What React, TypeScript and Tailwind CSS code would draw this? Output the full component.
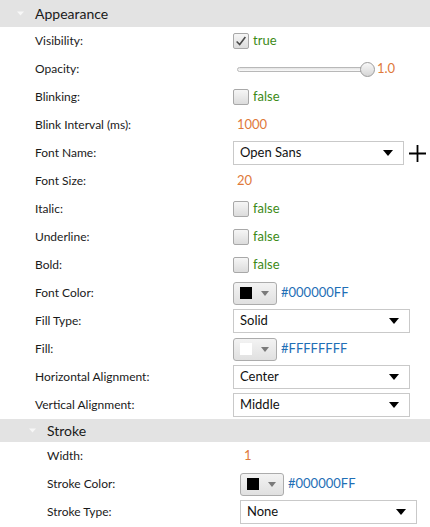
import React from "react";

const font = { fontFamily: "Lato, 'Open Sans', sans-serif" };

type Row =
  | { label: string; kind: "bool"; value: boolean }
  | { label: string; kind: "num"; value: string }
  | { label: string; kind: "slider"; value: string }
  | { label: string; kind: "select"; value: string; plus?: boolean }
  | { label: string; kind: "color"; value: string; swatch: string };

const appearance: Row[] = [
  { label: "Visibility:", kind: "bool", value: true },
  { label: "Opacity:", kind: "slider", value: "1.0" },
  { label: "Blinking:", kind: "bool", value: false },
  { label: "Blink Interval (ms):", kind: "num", value: "1000" },
  { label: "Font Name:", kind: "select", value: "Open Sans", plus: true },
  { label: "Font Size:", kind: "num", value: "20" },
  { label: "Italic:", kind: "bool", value: false },
  { label: "Underline:", kind: "bool", value: false },
  { label: "Bold:", kind: "bool", value: false },
  { label: "Font Color:", kind: "color", value: "#000000FF", swatch: "#000000" },
  { label: "Fill Type:", kind: "select", value: "Solid" },
  { label: "Fill:", kind: "color", value: "#FFFFFFFF", swatch: "#ffffff" },
  { label: "Horizontal Alignment:", kind: "select", value: "Center" },
  { label: "Vertical Alignment:", kind: "select", value: "Middle" },
];

const stroke: Row[] = [
  { label: "Width:", kind: "num", value: "1" },
  { label: "Stroke Color:", kind: "color", value: "#000000FF", swatch: "#000000" },
  { label: "Stroke Type:", kind: "select", value: "None" },
];

function Checkbox({ checked }: { checked: boolean }) {
  return (
    <span className="flex h-4 w-4 items-center justify-center rounded-[2px] border border-[#a8a8a8] bg-gradient-to-b from-[#f6f6f6] to-[#dcdcdc]">
      {checked && (
        <svg viewBox="0 0 16 16" className="h-3.5 w-3.5">
          <path d="M3 8.5 L6.5 12 L13 3.5" fill="none" stroke="#4a4a4a" strokeWidth="1.8" />
        </svg>
      )}
    </span>
  );
}

function Arrow({ color = "#000", w = 10, h = 6 }: { color?: string; w?: number; h?: number }) {
  return (
    <svg width={w} height={h} viewBox="0 0 10 6">
      <path d="M0 0 H10 L5 6 Z" fill={color} />
    </svg>
  );
}

function Value({ row }: { row: Row }) {
  switch (row.kind) {
    case "bool":
      return (
        <div className="flex items-center gap-1">
          <Checkbox checked={row.value} />
          <span className="text-[13px] text-[#3c8a16]">{row.value ? "true" : "false"}</span>
        </div>
      );
    case "num":
      return <span className="pl-1 text-[13px] text-[#e0793a]">{row.value}</span>;
    case "slider":
      return (
        <div className="flex items-center">
          <div className="ml-1 flex w-[138px] items-center">
            <div className="h-[5px] flex-1 rounded-full border border-[#b8b8b8] bg-gradient-to-b from-[#e4e4e4] to-[#fafafa]" />
            <div className="-ml-1 h-[15px] w-[15px] rounded-full border border-[#9c9c9c] bg-gradient-to-b from-[#f8f8f8] to-[#d6d6d6]" />
          </div>
          <span className="ml-[2px] text-[13px] text-[#e0793a]">{row.value}</span>
        </div>
      );
    case "select":
      return (
        <div className="flex items-center">
          <div
            className={`flex h-6 items-center justify-between border border-[#c9c9c9] bg-white pl-[6px] pr-[10px] ${
              row.plus ? "w-[171px]" : "w-[177px]"
            }`}
          >
            <span className="text-[13px] text-[#111]">{row.value}</span>
            <Arrow />
          </div>
          {row.plus && (
            <svg width="17" height="17" viewBox="0 0 17 17" className="ml-[5px]">
              <path d="M8.5 0 V17 M0 8.5 H17" stroke="#000" strokeWidth="1.8" />
            </svg>
          )}
        </div>
      );
    case "color":
      return (
        <div className="flex items-center gap-1">
          <div className="flex h-[23px] w-[44px] items-center rounded-[3px] border border-[#acacac] bg-gradient-to-b from-[#f3f3f3] to-[#e0e0e0] pl-[6px]">
            <span className="h-3 w-3" style={{ backgroundColor: row.swatch }} />
            <span className="ml-[9px]">
              <Arrow color="#7a7a7a" w={8} h={5} />
            </span>
          </div>
          <span className="text-[13px] text-[#1f6fb6]">{row.value}</span>
        </div>
      );
  }
}

function Section({
  title,
  rows,
  indent,
  headerH,
  labelW,
}: {
  title: string;
  rows: Row[];
  indent: string;
  headerH: string;
  labelW: string;
}) {
  return (
    <div>
      <div className={`flex items-center bg-[#e3e3e3] ${headerH} ${indent}`}>
        <span className="-ml-[18px] mr-[11px]">
          <Arrow color="#f7f7f7" w={7} h={5} />
        </span>
        <span className="text-[14px] text-[#1a1a1a]">{title}</span>
      </div>
      {rows.map((r) => (
        <div key={r.label} className={`flex h-7 items-center ${indent}`}>
          <span className={`${labelW} shrink-0 text-[12px] text-[#1a1a1a]`}>{r.label}</span>
          <Value row={r} />
        </div>
      ))}
    </div>
  );
}

export default function App() {
  return (
    <div className="h-[527px] w-[430px] overflow-hidden bg-white" style={font}>
      <Section title="Appearance" rows={appearance} indent="pl-[35px]" headerH="h-[27px]" labelW="w-[198px]" />
      <Section title="Stroke" rows={stroke} indent="pl-[47px]" headerH="h-[23px]" labelW="w-[193px]" />
      <div className="mt-[1px] border-t border-[#d6d6d6]" />
    </div>
  );
}
